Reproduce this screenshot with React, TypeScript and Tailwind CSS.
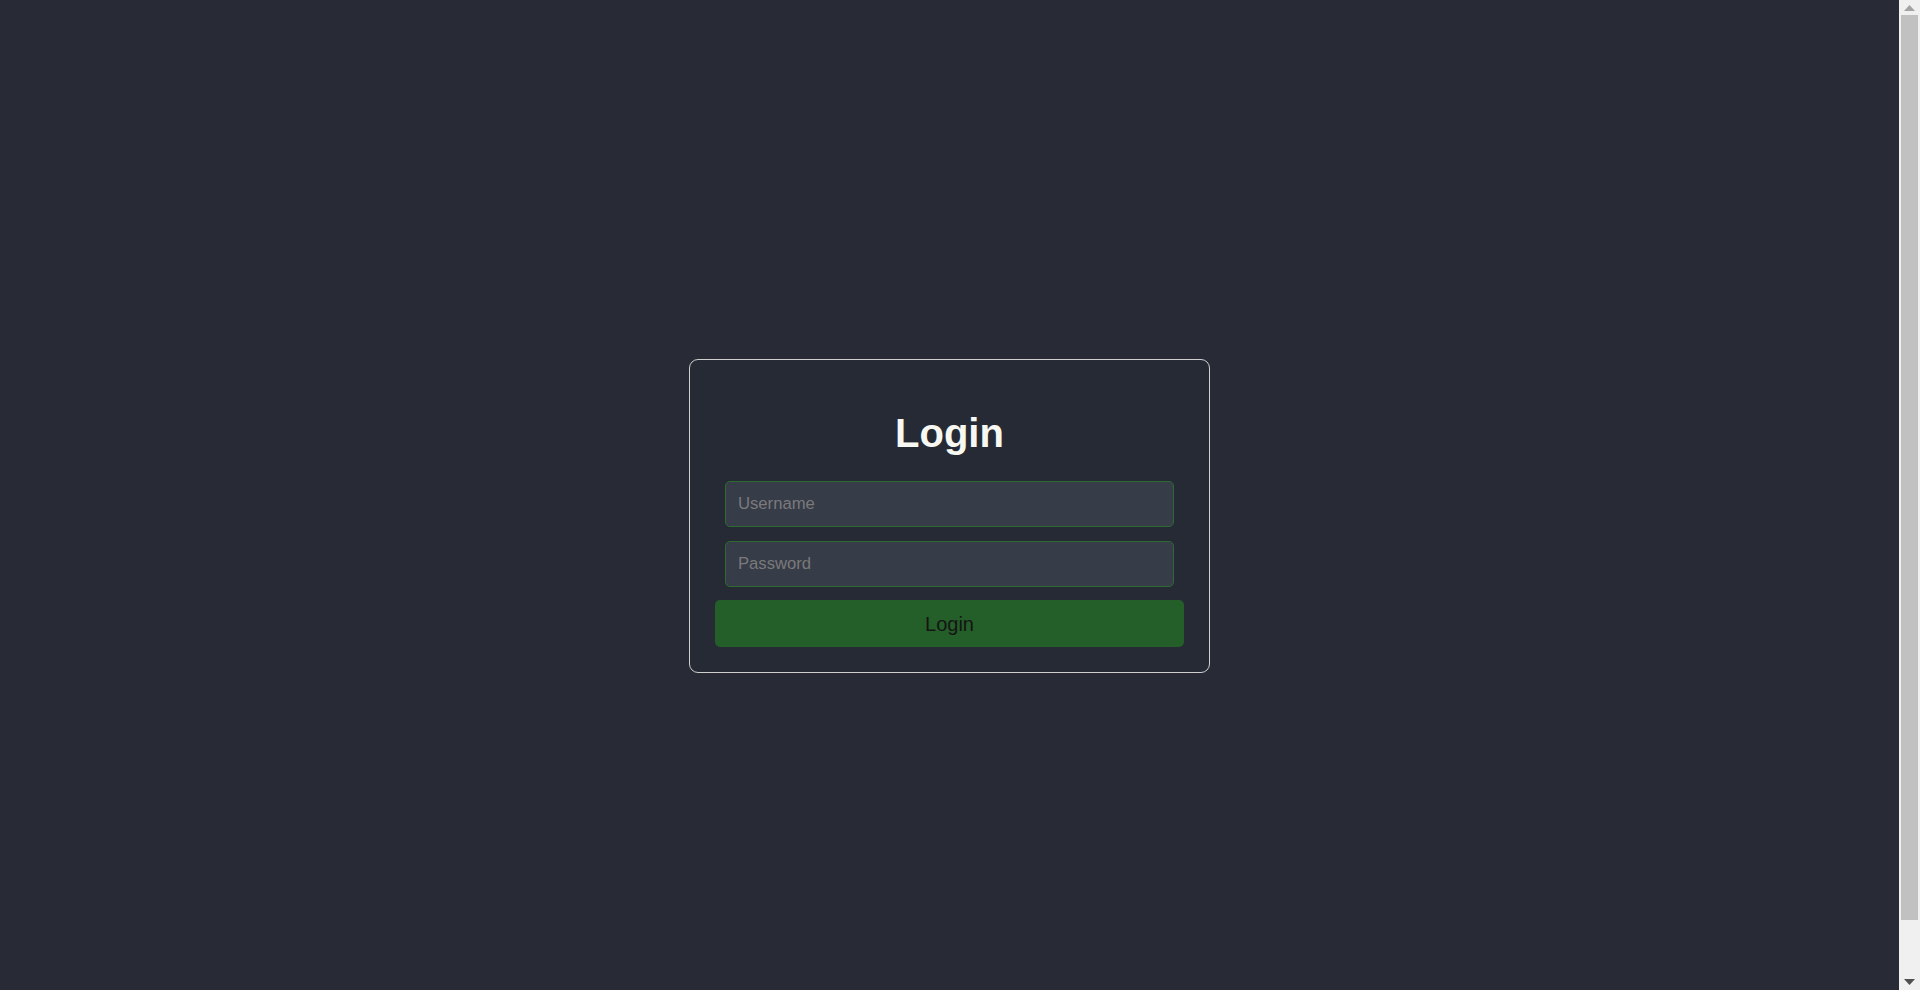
import React from 'react';

const font = { fontFamily: '"Liberation Sans", Arial, sans-serif' };

interface FieldProps {
  type: string;
  placeholder: string;
}

const Field: React.FC<FieldProps> = ({ type, placeholder }) => (
  <input
    type={type}
    placeholder={placeholder}
    className="mx-[10px] h-[46px] rounded-[5px] border border-[#2d6a30] bg-[#373c49] px-[12px] text-[16.67px] text-[#f8f8f2] outline-none placeholder:text-[#7a7a7a]"
  />
);

const LoginCard: React.FC = () => (
  <div className="flex w-[521px] flex-col rounded-[9px] border border-[#cfcfcf] bg-[#262a34] px-[25px] pt-[25px] pb-[25px]">
    <h1 className="my-[25px] text-center text-[40px] leading-[46px] font-bold text-[#f8f8f2]">Login</h1>
    <div className="flex flex-col gap-[14px]">
      <Field type="text" placeholder="Username" />
      <Field type="password" placeholder="Password" />
    </div>
    <button className="mt-[13px] h-[47px] rounded-[5px] bg-[#245e28] text-[20px] text-[#151515]">Login</button>
  </div>
);

// the reference shows the browser's classic scrollbar on the right
const ScrollBar: React.FC = () => (
  <div className="flex w-[21px] flex-col items-center bg-[#f0f0f0]">
    <div className="flex h-[15px] items-center justify-center">
      <svg width="11" height="6" viewBox="0 0 11 6">
        <path d="M5.5 0 L11 6 L0 6 Z" fill="#a3a3a3" />
      </svg>
    </div>
    <div className="h-[905px] w-[17px] bg-[#c1c1c1]" />
    <div className="flex-1" />
    <div className="flex h-[17px] items-center justify-center">
      <svg width="11" height="6" viewBox="0 0 11 6">
        <path d="M0 0 L11 0 L5.5 6 Z" fill="#505050" />
      </svg>
    </div>
  </div>
);

export default function App() {
  return (
    <div className="flex h-screen overflow-hidden bg-[#282a36]" style={font}>
      <main className="flex flex-1 items-center justify-center pt-[42px]">
        <LoginCard />
      </main>
      <ScrollBar />
    </div>
  );
}
